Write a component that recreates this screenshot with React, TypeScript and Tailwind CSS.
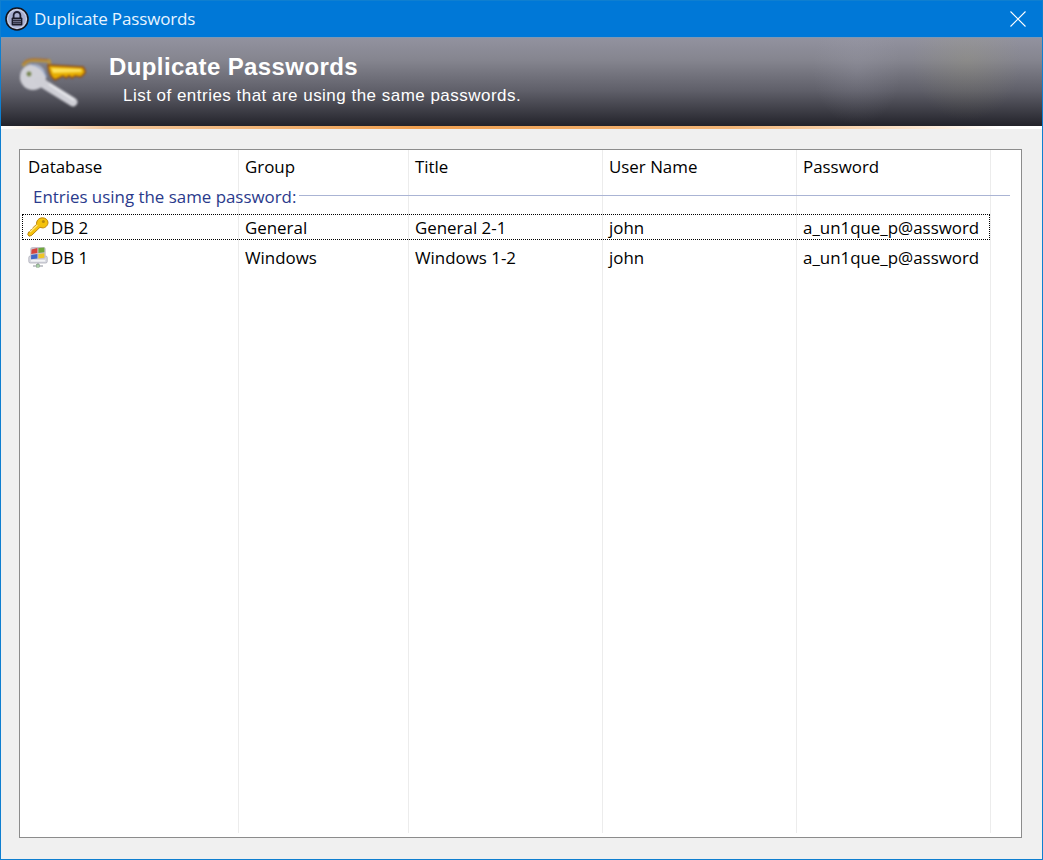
const uiFont = "font-['Open_Sans','Noto_Sans',sans-serif]";

const columns = [
  { label: "Database", width: "w-[219px]", pad: "pl-2" },
  { label: "Group", width: "w-[170px]", pad: "pl-1.5" },
  { label: "Title", width: "w-[194px]", pad: "pl-1.5" },
  { label: "User Name", width: "w-[194px]", pad: "pl-1.5" },
  { label: "Password", width: "w-[194px]", pad: "pl-1.5" },
];

const rows = [
  { db: "DB 2", icon: "key", cells: ["General", "General 2-1", "john", "a_un1que_p@assword"], focused: true },
  { db: "DB 1", icon: "windows", cells: ["Windows", "Windows 1-2", "john", "a_un1que_p@assword"], focused: false },
];

function LockIcon() {
  return (
    <svg width="24" height="24" viewBox="0 0 24 24" className="shrink-0">
      <circle cx="12" cy="12" r="11" fill="#c9cfe6" stroke="#14141c" strokeWidth="1.6" />
      <circle cx="12" cy="12" r="8.8" fill="#a9afd0" />
      <path d="M8.6 11V8.4a3.4 3.4 0 0 1 6.8 0V11" fill="none" stroke="#1d1d30" strokeWidth="1.8" />
      <rect x="6.6" y="10.6" width="10.8" height="7.8" rx="1" fill="#1a1a28" />
      <path d="M8 12.6h8M8 14.4h8M8 16.2h8" stroke="#8d90ad" strokeWidth="0.8" />
    </svg>
  );
}

function BannerKeys() {
  return (
    <svg width="68" height="52" viewBox="0 0 68 52" className="mt-[7px] shrink-0 blur-[0.8px]">
      <path d="M4 9 Q6 3 15 3 L30 4 L31 9" fill="none" stroke="#b89440" strokeWidth="3.5" />
      <path d="M4 7 Q7 2 15 2 L29 2.5" fill="none" stroke="#a8602c" strokeWidth="1" />
      <path d="M29 8 L64 10 Q67 14 66 16 L62 20 L56 19 L53 21 L50 19 L47 21 L44 19 L36 23 Q30 20 29 8 Z" fill="#e6ad00" stroke="#8f4c14" strokeWidth="1.5" />
      <path d="M32 11 L62 12 L63 15 L34 16 Z" fill="#ffe45c" />
      <circle cx="14" cy="20" r="13" fill="#d0d0d7" />
      <path d="M20 24 L54 45" stroke="#cfcfd6" strokeWidth="9" strokeLinecap="round" />
      <path d="M30 27 L55 43" stroke="#eceDf0" strokeWidth="2" />
      <circle cx="10" cy="17" r="2.4" fill="#75834f" />
      <path d="M12 7 Q23 9 28 20" fill="none" stroke="#7d92bd" strokeWidth="1.2" />
    </svg>
  );
}

function GoldKey() {
  return (
    <svg width="22" height="20" viewBox="0 0 22 20" className="shrink-0">
      <path d="M21 5.5c0 3-2.8 5.6-5.6 5.4L13 10.3 4.6 18.4 2 19.2 0.8 17.6 1.6 15 3.4 14.6 3.8 12.8 5.8 12.2 6.2 10.4 9.6 7.4C9 4 11.8 0.8 15.2 0.8 18.4 0.8 21 2.8 21 5.5Z" fill="#f4c20d" stroke="#b47b05" strokeWidth="0.9" />
      <circle cx="16.4" cy="4.6" r="1.5" fill="#b88a10" />
      <path d="M10.4 8 3 15" stroke="#ffe98a" strokeWidth="1.1" />
    </svg>
  );
}

function WindowsMonitor() {
  return (
    <svg width="20" height="22" viewBox="0 0 20 22" className="shrink-0">
      <rect x="0.8" y="10" width="18.4" height="7" rx="1.5" fill="#d9dbe2" stroke="#a3a5b0" strokeWidth="0.7" />
      <path d="M3 14.8h14" stroke="#f7f7f9" strokeWidth="1.4" />
      <rect x="2.2" y="1" width="15.6" height="12" rx="2.5" fill="#c9c3cf" />
      <path d="M3.6 3.4 9.4 2 9.4 7 3.2 8Z" fill="#d5443c" />
      <path d="M10.4 2 16.4 1.6 16.4 6.2 10.4 7Z" fill="#6fa83c" />
      <path d="M3.2 9 9.4 8 9.4 12.6 3 13.2Z" fill="#4168c8" />
      <path d="M10.4 8 16.4 7.2 16.4 11.8 10.4 12.6Z" fill="#eec628" />
      <path d="M10 17V19.5M5 20h10" stroke="#8c8f9a" strokeWidth="1.1" />
      <rect x="8.6" y="18.4" width="2.8" height="2.8" fill="#a9d0a5" stroke="#6d8f6d" strokeWidth="0.4" />
    </svg>
  );
}

export default function App() {
  return (
    <div className={`flex h-[860px] w-[1043px] flex-col overflow-hidden border border-[#0f7fd0] bg-[#f0f0f0] ${uiFont}`}>
      <div className="flex h-[36px] shrink-0 items-center bg-[#0078d7] pl-[4px] pr-[16px] text-white">
        <LockIcon />
        <span className="ml-[5px] flex-1 text-[17px] tracking-[-0.15px] text-[#e8f4ff]">Duplicate Passwords</span>
        <svg width="16" height="16" viewBox="0 0 16 16">
          <path d="M0.5 0.5 15.5 15.5M15.5 0.5 0.5 15.5" stroke="#fff" strokeWidth="1.1" />
        </svg>
      </div>

      <div className="relative flex h-[89px] shrink-0 border-t border-[#7d98b4] bg-[linear-gradient(to_bottom,#92929f_0%,#85858f_25%,#5f5f69_60%,#2f2f37_92%,#23232a_100%)] pl-[18px] pt-[12px] font-['Liberation_Sans',sans-serif] text-white">
        <div className="absolute inset-y-0 right-[15px] w-[120px] bg-[radial-gradient(ellipse_at_50%_25%,rgba(175,170,110,0.16),transparent_65%)]" />
        <div className="absolute inset-y-0 right-[140px] w-[90px] bg-[radial-gradient(ellipse_at_50%_35%,rgba(170,170,185,0.18),transparent_70%)]" />
        <BannerKeys />
        <div className="relative ml-[22px] flex flex-col">
          <span className="mt-[2px] text-[24px] font-bold leading-[30px] tracking-[0.4px]">Duplicate Passwords</span>
          <span className="ml-[14px] mt-[3px] text-[17px] leading-[22px] tracking-[0.48px]">List of entries that are using the same passwords.</span>
        </div>
      </div>
      <div className="h-[3px] shrink-0 bg-[linear-gradient(to_right,#ffffff_0%,#f2c79c_10%,#f0a050_40%,#f2b577_70%,#fbe6d0_88%,#ffffff_96%)]" />

      <div className="flex flex-1 pb-[21px] pl-[18px] pr-[20px] pt-[20px]">
        <div className="relative flex-1 border border-[#8c8c8c] bg-white text-[16.9px] text-black">
          {/* column separators run the whole height of the list */}
          <div className="absolute inset-x-0 bottom-[4px] top-0 flex">
            {columns.map((c) => (
              <div key={c.label} className={`${c.width} border-r border-[#ececec]`} />
            ))}
          </div>

          <div className="relative flex h-[32px] items-center">
            {columns.map((c) => (
              <div key={c.label} className={`${c.width} ${c.pad} mt-[2px]`}>{c.label}</div>
            ))}
          </div>

          <div className="relative flex h-[30px] items-center pl-[13px] pr-[11px]">
            <span className="text-[#2a3a8c]">Entries using the same password:</span>
            <div className="mb-[4px] ml-[3px] h-px flex-1 bg-[#aab4d4]" />
          </div>

          <div className="relative">
            {rows.map((r) => (
              <div key={r.db} className="flex h-[30px] items-center">
                <div className={`ml-[2px] flex h-[26px] w-[968px] items-center ${r.focused ? "border border-dotted border-black" : "border border-transparent"}`}>
                  <div className="flex w-[216px] items-center pl-[1px]">
                    <span className="flex w-[27px] shrink-0 justify-center">
                      {r.icon === "key" ? <GoldKey /> : <WindowsMonitor />}
                    </span>
                    <span className="mt-[2px]">{r.db}</span>
                  </div>
                  <div className="mt-[2px] w-[170px] pl-1.5">{r.cells[0]}</div>
                  <div className="mt-[2px] w-[194px] pl-1.5">{r.cells[1]}</div>
                  <div className="mt-[2px] w-[194px] pl-1.5">{r.cells[2]}</div>
                  <div className="mt-[2px] w-[192px] pl-1.5">{r.cells[3]}</div>
                </div>
              </div>
            ))}
          </div>
        </div>
      </div>
    </div>
  );
}
